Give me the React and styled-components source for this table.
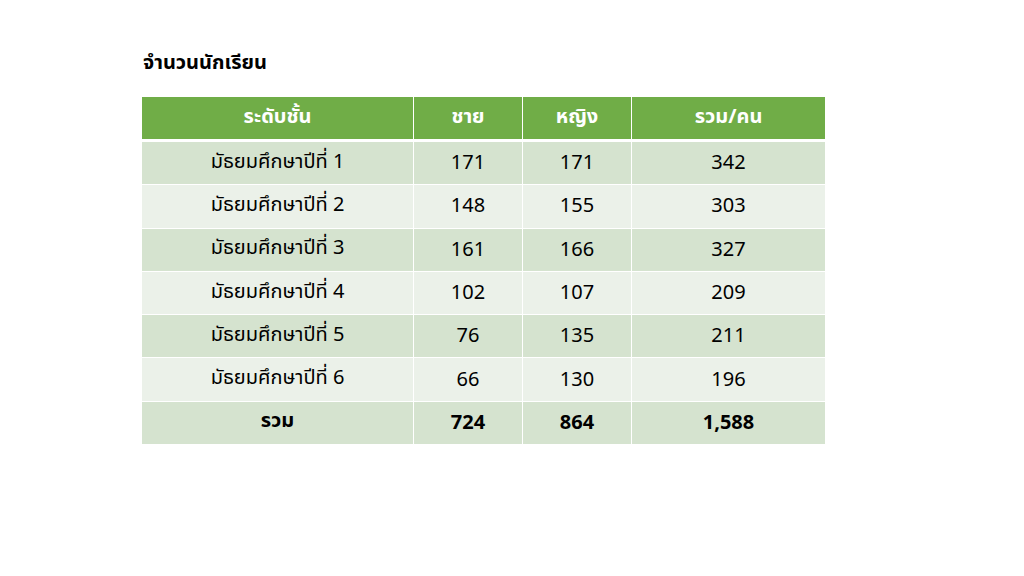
import React from "react";
import styled, { createGlobalStyle } from "styled-components";

const Global = createGlobalStyle`
  html, body { margin: 0; padding: 0; background: #ffffff; }
  body { font-family: "Noto Sans", "Noto Sans Thai", "DejaVu Sans", sans-serif; }
`;

const Page = styled.div`
  width: 1024px;
  height: 576px;
  box-sizing: border-box;
  padding: 47px 0 0 142px;
  display: flex;
  flex-direction: column;
  background: #ffffff;
`;

const Title = styled.h1`
  margin: 0 0 0 1px;
  height: 30px;
  line-height: 30px;
  font-size: 20px;
  font-weight: 700;
  color: #000000;
`;

const Table = styled.div`
  margin-top: 20px;
  width: 682px;
  display: grid;
  grid-template-columns: 271px 108px 108px 193px;
  column-gap: 1px;
  background: #ffffff;
`;

const HeadCell = styled.div`
  height: 42px;
  box-sizing: border-box;
  padding-bottom: 2px;
  margin-bottom: 3px;
  background: #70ad47;
  color: #ffffff;
  font-size: 20px;
  font-weight: 700;
  display: flex;
  align-items: center;
  justify-content: center;
`;

const Cell = styled.div`
  height: 42.3px;
  box-sizing: border-box;
  padding-bottom: 3px;
  margin-bottom: 1px;
  background: ${(p) => (p.$band ? "#d5e3cf" : "#ebf1e9")};
  color: #000000;
  font-size: 20px;
  font-weight: ${(p) => (p.$bold ? 700 : 400)};
  display: flex;
  align-items: center;
  justify-content: center;
`;

const headers = ["ระดับชั้น", "ชาย", "หญิง", "รวม/คน"];
const rows = [
  ["มัธยมศึกษาปีที่ 1", "171", "171", "342"],
  ["มัธยมศึกษาปีที่ 2", "148", "155", "303"],
  ["มัธยมศึกษาปีที่ 3", "161", "166", "327"],
  ["มัธยมศึกษาปีที่ 4", "102", "107", "209"],
  ["มัธยมศึกษาปีที่ 5", "76", "135", "211"],
  ["มัธยมศึกษาปีที่ 6", "66", "130", "196"],
];
const total = ["รวม", "724", "864", "1,588"];

export default function App() {
  return (
    <>
      <Global />
      <Page>
        <Title>จำนวนนักเรียน</Title>
        <Table>
          {headers.map((h) => (
            <HeadCell key={h}>{h}</HeadCell>
          ))}
          {rows.map((r, i) =>
            r.map((c, j) => (
              <Cell key={`${i}-${j}`} $band={i % 2 === 0}>
                {c}
              </Cell>
            ))
          )}
          {total.map((c, j) => (
            <Cell key={`t-${j}`} $band $bold>
              {c}
            </Cell>
          ))}
        </Table>
      </Page>
    </>
  );
}
